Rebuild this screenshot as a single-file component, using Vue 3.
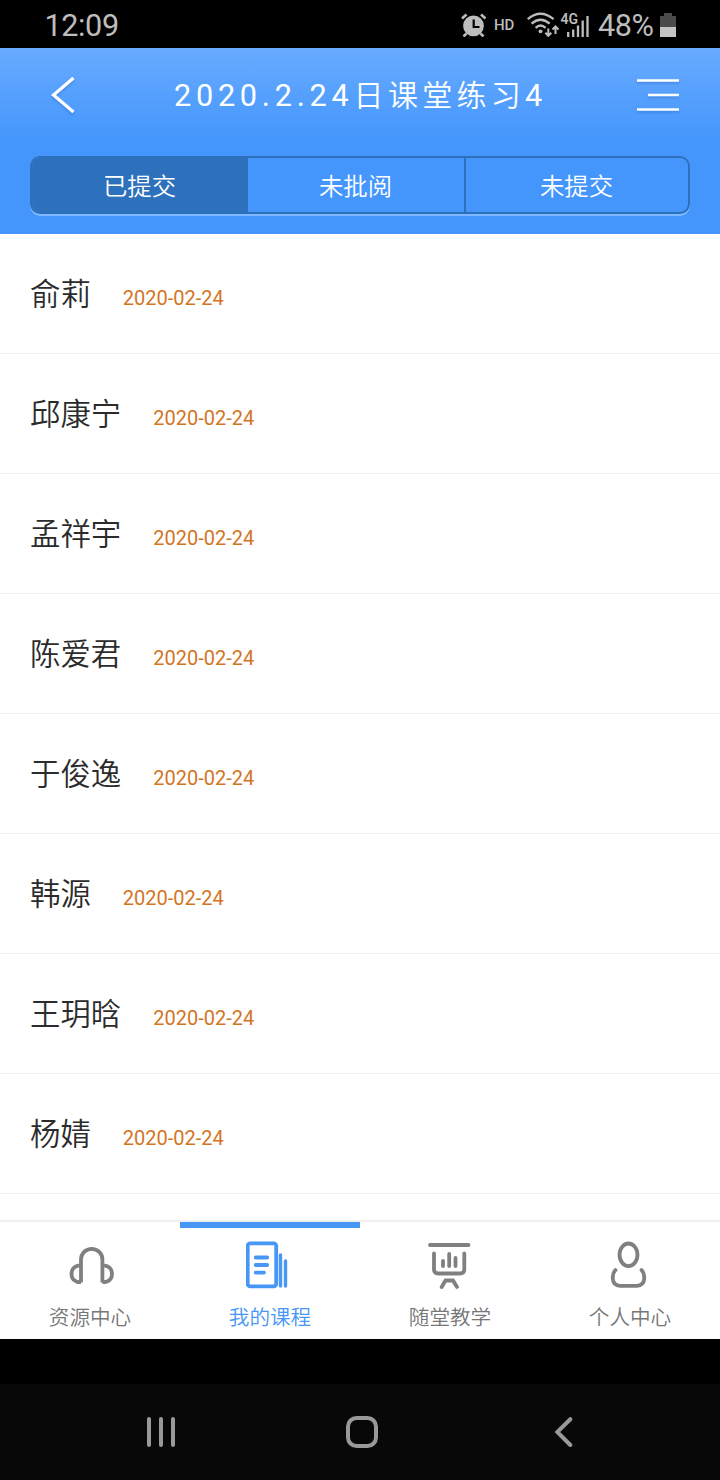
<template>
  <div class="phone">
    <div class="status-bar">
      <span class="clock">12:09</span>
      <div class="status-right">
        <svg class="alarm" viewBox="0 0 26 24" width="26" height="24">
          <circle cx="12.500" cy="12.800" r="10.400" fill="#bdbdbd" />
          <path d="M1 5.500 5.500 1.500M24.500 5.500 20 1.500M5.500 20.500 2.500 23.500M19.500 20.500 22.500 23.500" stroke="#bdbdbd" stroke-width="2.600" />
          <path d="M12.700 6.500V14H18.500" fill="none" stroke="#000" stroke-width="2.200" />
        </svg>
        <span class="hd">HD</span>
        <svg class="wifi" viewBox="0 0 32 26" width="32" height="26">
          <g fill="none" stroke="#bdbdbd" stroke-width="2.300">
            <path d="M.7 7.200Q13.500-3.600 26.500 7.200" />
            <path d="M4.500 11.700Q13.500 3.800 22.700 11.700" />
            <path d="M8.600 15.800Q13.500 11.300 18.600 15.800" />
          </g>
          <circle cx="13.500" cy="19.300" r="1.900" fill="#bdbdbd" />
          <path d="M21.300 16.500V24M18.300 20.800 21.300 23.800 24.300 20.800M28.500 22V14.500M25.500 17.500 28.500 14.500 31.500 17.500" fill="none" stroke="#bdbdbd" stroke-width="2" />
        </svg>
        <div class="signal">
          <svg viewBox="0 0 24 24" width="24" height="24">
            <path d="M3.200 19V24M8.200 16.500V24M13 12.500V24M17.700 7.500V24M22.500 3V24" stroke="#bdbdbd" stroke-width="2.300" />
          </svg>
          <span class="net">4G</span>
        </div>
        <span class="percent">48%</span>
        <svg class="battery" viewBox="0 0 16 24" width="16" height="24">
          <path d="M4 0H12V3H16V14H0V3H4Z" fill="#4b4b4b" />
          <path d="M0 14H16V24H0Z" fill="#c4c4c4" />
        </svg>
      </div>
    </div>

    <header class="header">
      <div class="title-row">
        <svg class="back" viewBox="0 0 26 40" width="26" height="40">
          <path d="M23.500 3 3.500 20 23.500 37" fill="none" stroke="#fff" stroke-width="3.200" />
        </svg>
        <h1 class="title"><span class="latin">2020.2.24</span>日课堂练习<span class="latin">4</span></h1>
        <svg class="menu" viewBox="0 0 42 34" width="42" height="34">
          <path d="M0 2.500H42M11 17H42M0 31.500H42" stroke="#fff" stroke-width="2.600" />
        </svg>
      </div>
      <div class="segment">
        <div
          v-for="(tab, i) in tabs"
          :key="tab"
          class="segment-item"
          :class="{ on: i === activeTab }"
          @click="activeTab = i"
        >
          {{ tab }}
        </div>
      </div>
    </header>

    <ul class="list">
      <li v-for="item in students" :key="item.name" class="row">
        <span class="name">{{ item.name }}</span>
        <span class="date">{{ item.date }}</span>
      </li>
    </ul>

    <nav class="tabbar">
      <a class="tab">
        <svg viewBox="0 0 48 48" width="48" height="48">
          <path d="M15 41.500V18.500A10.700 10.700 0 0 1 36.400 18.500V41.500M15 24.300C9 24 5.500 28 5.500 33S9 41.200 15 41.200M36.400 24.300C42.500 24 46 28 46 33S42.500 41.200 36.400 41.200" />
        </svg>
        <span>资源中心</span>
      </a>
      <a class="tab active">
        <svg viewBox="0 0 48 48" width="48" height="48">
          <rect x="1.700" y="2.300" width="28.500" height="43" rx="2.500" />
          <path d="M9.700 16.500H21.200M9.700 24H21.200M9.700 31.600H18" stroke-linecap="round" />
          <path d="M34.500 14V45M39.500 20V45" stroke-linecap="round" stroke-width="3.400" />
        </svg>
        <span>我的课程</span>
      </a>
      <a class="tab">
        <svg viewBox="0 0 48 48" width="48" height="48">
          <path d="M4 4H42.500M8 12.500V28.500Q8 32.500 12.500 32.500H34Q38.300 32.500 38.300 28.500V12.500M17 20V25M23.200 13V25M29.500 17V25M15.700 46 19.500 39.500H27L31 46" stroke-linecap="round" />
        </svg>
        <span>随堂教学</span>
      </a>
      <a class="tab">
        <svg viewBox="0 0 48 48" width="48" height="48">
          <ellipse cx="22.500" cy="13.800" rx="9" ry="11.300" />
          <path d="M9.500 29C7 31.500 6.500 34.500 6.800 38Q7.500 44.500 14 44.800H31Q37.500 44.500 38.200 38C38.500 34.500 38 31.500 35.500 29" stroke-linecap="round" />
        </svg>
        <span>个人中心</span>
      </a>
    </nav>

    <div class="gap"></div>
    <div class="sys-nav">
      <svg viewBox="0 0 28 30" width="28" height="30">
        <path d="M2 2V28M14 2V28M26 2V28" />
      </svg>
      <svg class="home" viewBox="0 0 32 32" width="32" height="32">
        <rect x="2" y="2" width="28" height="28" rx="8.500" />
      </svg>
      <svg viewBox="0 0 18 30" width="18" height="30">
        <path d="M15.300 2.200 2.300 15 15.300 28" />
      </svg>
    </div>
  </div>
</template>

<script setup>
import { ref } from "vue";

const tabs = ["已提交", "未批阅", "未提交"];
const activeTab = ref(0);

const students = [
  { name: "俞莉", date: "2020-02-24" },
  { name: "邱康宁", date: "2020-02-24" },
  { name: "孟祥宇", date: "2020-02-24" },
  { name: "陈爱君", date: "2020-02-24" },
  { name: "于俊逸", date: "2020-02-24" },
  { name: "韩源", date: "2020-02-24" },
  { name: "王玥晗", date: "2020-02-24" },
  { name: "杨婧", date: "2020-02-24" },
];
</script>

<style>
body {
  background: #000;
}
</style>

<style scoped>
.phone {
  width: 720px;
  height: 1480px;
  display: flex;
  flex-direction: column;
  overflow: hidden;
  background: #000;
  font-family: Roboto, "Noto Sans CJK SC", sans-serif;
}

.phone svg {
  display: block;
  flex: none;
}

/* 状态栏 */
.status-bar {
  height: 48px;
  flex: none;
  box-sizing: border-box;
  padding: 2px 44px 0 44.5px;
  display: flex;
  align-items: center;
  justify-content: space-between;
  color: #bdbdbd;
}

.clock {
  font-size: 30.6px;
  letter-spacing: -0.4px;
}

.status-right {
  display: flex;
  align-items: center;
}

.hd {
  margin-left: 7px;
  font-size: 15px;
  font-weight: 500;
}

.wifi {
  margin-left: 13px;
}

.signal {
  position: relative;
  margin-left: 6px;
}

.net {
  position: absolute;
  left: -5px;
  top: -1px;
  font-size: 14px;
  line-height: 14px;
  font-weight: 600;
  background: #000;
  height: 13px;
}

.percent {
  margin-left: 8.5px;
  font-size: 30.6px;
  letter-spacing: -0.4px;
}

.battery {
  margin-left: 6.5px;
}

/* 头部 */
.header {
  height: 186px;
  flex: none;
  background: linear-gradient(#68abff, #4496fc 92px);
  color: #fff;
}

.title-row {
  height: 108px;
  box-sizing: border-box;
  padding: 0 41px 14px 50px;
  display: flex;
  align-items: center;
  justify-content: space-between;
}

.back,
.menu {
  filter: drop-shadow(0 2px 1px rgba(30, 90, 170, 0.3));
}

.title {
  margin: 0 0 4px 8px;
  font-size: 30px;
  font-weight: 350;
  letter-spacing: 4.3px;
  white-space: nowrap;
}

.latin {
  font-size: 30.6px;
  font-weight: 400;
  letter-spacing: 4.8px;
}

.segment {
  height: 58px;
  margin: 0 30px;
  box-sizing: border-box;
  display: flex;
  border: 2px solid #2d71bd;
  border-radius: 10px;
  background: #4496fc;
  box-shadow: 0 2px 0 #7db7ff;
}

.segment-item {
  box-sizing: border-box;
  width: 218px;
  padding: 0 1px 1px 0;
  display: flex;
  align-items: center;
  justify-content: center;
  font-size: 24.4px;
  font-weight: 350;
  border-right: 2px solid #2d71bd;
}

.segment-item:first-child {
  width: 216px;
  border-right: 0;
  border-radius: 8px 0 0 8px;
}

.segment-item:last-child {
  flex: 1;
  border-right: 0;
}

.segment-item.on {
  background: #2d71bd;
}

/* 学生列表 */
.list {
  height: 986px;
  flex: none;
  margin: 0;
  padding: 0;
  list-style: none;
  overflow: hidden;
  background: #fff;
}

.row {
  height: 120px;
  box-sizing: border-box;
  padding: 0 30px;
  display: flex;
  align-items: baseline;
  border-bottom: 1px solid #f0f0f0;
  line-height: 122px;
}

.name {
  font-size: 30.4px;
  font-weight: 350;
  color: #2b2b2b;
}

.date {
  margin-left: 32px;
  font-size: 20px;
  color: #d3751f;
}

/* 底部导航 */
.tabbar {
  height: 119px;
  flex: none;
  box-sizing: border-box;
  display: flex;
  border-top: 2px solid #efefef;
  background: #fff;
}

.tab {
  flex: 1;
  box-sizing: border-box;
  border-top: 6px solid transparent;
  padding-top: 13px;
  display: flex;
  flex-direction: column;
  align-items: center;
  font-size: 20.6px;
  line-height: 30px;
  font-weight: 350;
  color: #777;
}

.tab svg {
  fill: none;
  stroke: #808080;
  stroke-width: 3.8;
}

.tab span {
  margin-top: 14px;
}

.tab.active {
  border-top-color: #4896f6;
  color: #4896f6;
}

.tab.active svg {
  stroke: #4896f6;
}

/* 系统导航键 */
.gap {
  height: 45px;
  flex: none;
}

.sys-nav {
  height: 96px;
  flex: none;
  box-sizing: border-box;
  padding: 0 147px;
  display: flex;
  align-items: center;
  justify-content: space-between;
  background: #080808;
}

.sys-nav svg {
  fill: none;
  stroke: #999;
  stroke-width: 4;
  stroke-linecap: round;
}

.sys-nav .home {
  margin-right: 6px;
}
</style>
